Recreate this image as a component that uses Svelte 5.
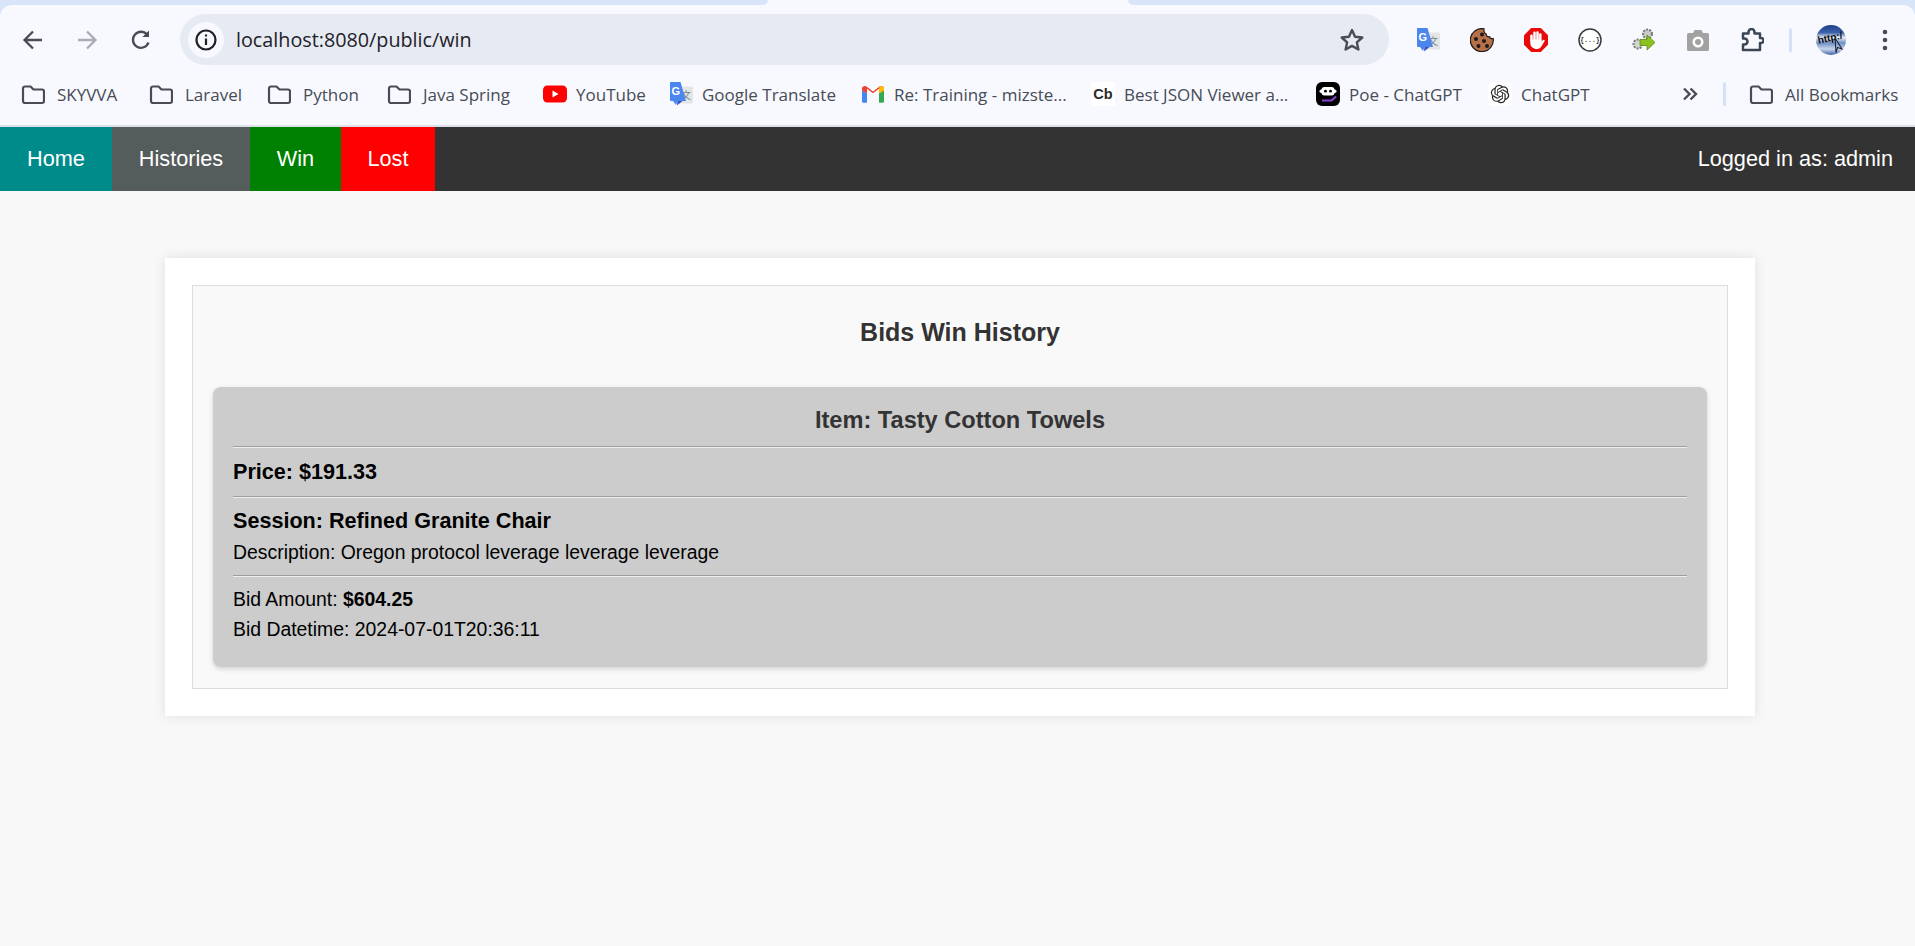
<script>
  const navLinks = [
    { label: 'Home', color: '#008b8b', width: 112 },
    { label: 'Histories', color: '#555c5c', width: 138 },
    { label: 'Win', color: '#008000', width: 91 },
    { label: 'Lost', color: '#ff0000', width: 94 }
  ];

  // widths of the bookmark slots, a shelf does not distribute them evenly
  const bookmarks = [
    { label: 'SKYVVA', icon: 'folder', width: 128 },
    { label: 'Laravel', icon: 'folder', width: 118 },
    { label: 'Python', icon: 'folder', width: 120 },
    { label: 'Java Spring', icon: 'folder', width: 156 },
    { label: 'YouTube', icon: 'youtube', width: 126 },
    { label: 'Google Translate', icon: 'translate', width: 192 },
    { label: 'Re: Training - mizste...', icon: 'gmail', width: 230 },
    { label: 'Best JSON Viewer a...', icon: 'cb', width: 225 },
    { label: 'Poe - ChatGPT', icon: 'poe', width: 172 },
    { label: 'ChatGPT', icon: 'gpt', width: 120 }
  ];

  const bid = {
    item: 'Tasty Cotton Towels',
    price: '$191.33',
    session: 'Refined Granite Chair',
    description: 'Oregon protocol leverage leverage leverage',
    amount: '$604.25',
    datetime: '2024-07-01T20:36:11'
  };
</script>

{#snippet folder()}
  <svg class="bm-icon" viewBox="0 0 24 24" fill="none" stroke="#474c55" stroke-width="2.2" stroke-linejoin="round">
    <path d="M2 6.500a2 2 0 0 1 2-2h5.500l3 3H21a2 2 0 0 1 2 2V19a2 2 0 0 1-2 2H4a2 2 0 0 1-2-2z" />
  </svg>
{/snippet}

{#snippet translate()}
  <svg class="bm-icon" viewBox="0 0 24 24">
    <rect x="9" y="4.500" width="15" height="17" rx="1" fill="#e3e5e6" />
    <text x="17" y="17" font-size="10" text-anchor="middle" fill="#6f8388" font-family="'Noto Sans CJK SC', sans-serif">文</text>
    <path d="M1 0h10.500l5.500 19H8.500l-1.500 4-3-4H2a1 1 0 0 1-1-1z" fill="#4a86ee" />
    <path d="M8.500 19h5l-5.500 4.500z" fill="#3b4fc4" />
    <text x="6.800" y="13" font-size="11" font-weight="700" text-anchor="middle" fill="#fff" font-family="'Liberation Sans', sans-serif">G</text>
  </svg>
{/snippet}

<div class="browser">
  <div class="chrome">
    <div class="tabstrip">
      <div class="tab-left"></div>
      <div class="tab-active"></div>
      <div class="tab-right"></div>
    </div>

    <div class="toolbar">
      <div class="nav-buttons">
        <svg class="tb-icon" viewBox="0 0 24 24" fill="none" stroke="#474c55" stroke-width="2.300">
          <path d="M21 12H4M12 3.500 3.500 12l8.500 8.500" />
        </svg>
        <svg class="tb-icon" viewBox="0 0 24 24" fill="none" stroke="#a9adb4" stroke-width="2.300">
          <path d="M3 12h17M12 3.500 20.500 12 12 20.500" />
        </svg>
        <svg class="tb-icon" viewBox="0 0 24 24" fill="none" stroke="#474c55" stroke-width="2.300">
          <path d="M19.500 14.500A8 8 0 1 1 18 6.500" />
          <path d="M20 2.500V9h-6.500z" fill="#474c55" stroke="none" />
        </svg>
      </div>

      <div class="omnibox">
        <span class="site-info">
          <svg width="22" height="22" viewBox="0 0 22 22" fill="none" stroke="#1f2126" stroke-width="2.200">
            <circle cx="11" cy="11" r="9.500" />
            <path d="M11 9.500v6.500M11 5.500v2" />
          </svg>
        </span>
        <span class="url">localhost:8080/public/win</span>
        <svg class="star" viewBox="0 0 24 24" fill="none" stroke="#474c55" stroke-width="2.200" stroke-linejoin="round">
          <path d="M12 2.800l2.800 6.200 6.700.7-5 4.500 1.400 6.600-5.900-3.400-5.900 3.400 1.400-6.600-5-4.500 6.700-.7z" />
        </svg>
      </div>

      <div class="extensions">
        {@render translate()}
        <svg class="ext-icon" viewBox="0 0 24 24">
          <path d="M14 .8a11.500 11.500 0 1 0 9.200 9.700c-1.800.6-3.200-.3-3.500-1.700-2 .4-3.600-.8-3.500-2.800C14.600 6 13.600 3 14 .8z" fill="#b5714a" stroke="#1f1a17" stroke-width="1.200" />
          <circle cx="12" cy="6.500" r="2" fill="#1f1a17" />
          <circle cx="6" cy="11" r="2" fill="#1f1a17" />
          <circle cx="14" cy="13" r="2" fill="#1f1a17" />
          <circle cx="8.500" cy="18" r="2" fill="#1f1a17" />
          <circle cx="17" cy="18" r="2" fill="#1f1a17" />
        </svg>
        <svg class="ext-icon" viewBox="0 0 24 24">
          <path d="M7.200 0h9.600L24 7.200v9.600L16.800 24H7.200L0 16.800V7.200z" fill="#e80b0b" />
          <path d="M7.500 12.500V7.800M10.500 12.500V4.800M13.500 12.500V4.500M16.300 13V6.500" stroke="#fff" stroke-width="2.500" stroke-linecap="round" fill="none" />
          <path d="M6.300 11.500h11.200V14l1.200-1.800c.9-1.200 2.500-.2 1.800 1.100L17 19c-.9 1.300-2.200 2-4 2-4 0-6.700-2.400-6.700-6z" fill="#fff" />
        </svg>
        <svg class="ext-icon" viewBox="0 0 24 24">
          <circle cx="12" cy="12" r="11" fill="#fff" stroke="#3a3a3a" stroke-width="1.500" />
          <text x="12" y="14.300" font-size="6.500" font-weight="700" text-anchor="middle" fill="#2b2b2b" font-family="'Liberation Mono', monospace">&#123;...&#125;</text>
        </svg>
        <svg class="ext-icon" viewBox="0 0 24 24">
          <circle cx="15.500" cy="6" r="4.500" fill="#c9cbc9" stroke="#777" stroke-width="2" stroke-dasharray="2 1.200" />
          <circle cx="6" cy="16" r="4.500" fill="#d3d5d3" stroke="#777" stroke-width="2" stroke-dasharray="2 1.200" />
          <path d="M8 11.500h7V7l8 7.500-8 7.500v-4.500H8z" fill="#8cc21f" stroke="#5d8a12" stroke-width=".8" />
        </svg>
        <svg class="ext-icon" viewBox="0 0 24 24">
          <path d="M2.500 5H7l1.500-3h7L17 5h4.500A1.500 1.500 0 0 1 23 6.500v15a1.500 1.500 0 0 1-1.500 1.500h-19A1.500 1.500 0 0 1 1 21.500v-15A1.500 1.500 0 0 1 2.500 5z" fill="#a2a2a2" />
          <circle cx="12" cy="14" r="5.500" fill="#fff" />
          <circle cx="12" cy="14" r="3" fill="#a2a2a2" />
        </svg>
        <svg class="ext-icon" viewBox="0 0 24 24" fill="none" stroke="#3b4654" stroke-width="2.500" stroke-linejoin="round">
          <path d="M3 5.500h5.500V4a3 3 0 0 1 6 0v1.500H20V10h1a2.500 2.500 0 0 1 0 5h-1v7H3v-5.500h1.500a3 3 0 0 0 0-6H3z" />
        </svg>
      </div>

      <span class="divider"></span>

      <svg class="avatar" viewBox="0 0 30 30">
        <defs>
          <linearGradient id="globe" x1="0" y1="0" x2="0" y2="1">
            <stop offset="0" stop-color="#1f3f86" />
            <stop offset=".25" stop-color="#3a62ab" />
            <stop offset=".42" stop-color="#e6edf7" />
            <stop offset=".6" stop-color="#6f8fc4" />
            <stop offset=".8" stop-color="#c9d6ea" />
            <stop offset="1" stop-color="#3d62a8" />
          </linearGradient>
        </defs>
        <circle cx="15" cy="15" r="15" fill="url(#globe)" />
        <text x="2" y="16" font-size="10" font-weight="700" fill="#0c0c0c" font-family="'Liberation Sans', sans-serif" transform="rotate(-12 15 15)">http:/</text>
        <path d="M19 13l7 11-4.500-1.500-1.500 5z" fill="none" stroke="#1b2436" stroke-width="1.100" />
      </svg>

      <svg class="kebab" viewBox="0 0 6 22" fill="#474c55">
        <circle cx="3" cy="3" r="2.300" />
        <circle cx="3" cy="11" r="2.300" />
        <circle cx="3" cy="19" r="2.300" />
      </svg>
    </div>

    <div class="bookmarks">
      <div class="bookmark-list">
        {#each bookmarks as b}
          <span class="bookmark" class:is-folder={b.icon === 'folder'} style="width: {b.width}px">
            {#if b.icon === 'folder'}
              {@render folder()}
            {:else if b.icon === 'youtube'}
              <svg class="bm-icon" viewBox="0 0 24 24">
                <rect x="0" y="3.500" width="24" height="17" rx="4.500" fill="#f00" />
                <path d="M9.500 8.500v7l6-3.500z" fill="#fff" />
              </svg>
            {:else if b.icon === 'translate'}
              {@render translate()}
            {:else if b.icon === 'gmail'}
              <svg class="bm-icon" viewBox="0 0 24 24">
                <g transform="translate(0 1.500) scale(1 .88)">
                  <path d="M1 8v12.500A1.500 1.500 0 0 0 2.500 22H6V11z" fill="#4285f4" />
                  <path d="M18 11v11h3.500a1.500 1.500 0 0 0 1.500-1.500V8z" fill="#34a853" />
                  <path d="M1 5.500C1 3 4 2 5.500 3.500L12 9l6.500-5.500C20 2 23 3 23 5.500V8l-5 3.500V6L12 11 6 6v5.500L1 8z" fill="#ea4335" />
                  <path d="M18 6v5.500L23 8V5.500C23 3 20 2 18.500 3.500z" fill="#fbbc04" />
                </g>
              </svg>
            {:else if b.icon === 'cb'}
              <svg class="bm-icon" viewBox="0 0 24 24">
                <rect width="24" height="24" fill="#fff" />
                <text x="12" y="17" font-size="14.500" font-weight="700" text-anchor="middle" fill="#2a2a2a" font-family="'Liberation Sans', sans-serif">Cb</text>
              </svg>
            {:else if b.icon === 'poe'}
              <svg class="bm-icon" viewBox="0 0 24 24">
                <rect width="24" height="24" rx="6" fill="#000" />
                <rect x="5.500" y="5" width="13" height="8.500" rx="3" fill="#fff" />
                <rect x="3.500" y="7.500" width="17" height="3.500" rx="1.700" fill="#fff" />
                <circle cx="9.500" cy="9.200" r="1.400" fill="#000" />
                <circle cx="14.500" cy="9.200" r="1.400" fill="#000" />
                <path d="M6 18.500h9.500l4.500-4" fill="none" stroke="#8a3fd8" stroke-width="2.200" />
              </svg>
            {:else}
              <svg class="bm-icon" viewBox="0 0 24 24">
                <rect width="24" height="24" rx="5" fill="#fff" />
                <path transform="translate(2.800 2.800) scale(.77)" fill="#2a2a2a" d="M22.2819 9.8211a5.9847 5.9847 0 0 0-.5157-4.9108 6.0462 6.0462 0 0 0-6.5098-2.9A6.0651 6.0651 0 0 0 4.9807 4.1818a5.9847 5.9847 0 0 0-3.9977 2.9 6.0462 6.0462 0 0 0 .7427 7.0966 5.98 5.98 0 0 0 .511 4.9107 6.051 6.051 0 0 0 6.5146 2.9001A5.9847 5.9847 0 0 0 13.2599 24a6.0557 6.0557 0 0 0 5.7718-4.2058 5.9894 5.9894 0 0 0 3.9977-2.9001 6.0557 6.0557 0 0 0-.7475-7.0729zm-9.022 12.6081a4.4755 4.4755 0 0 1-2.8764-1.0408l.1419-.0804 4.7783-2.7582a.7948.7948 0 0 0 .3927-.6813v-6.7369l2.02 1.1686a.071.071 0 0 1 .038.052v5.5826a4.504 4.504 0 0 1-4.4945 4.4944zm-9.6607-4.1254a4.4708 4.4708 0 0 1-.5346-3.0137l.142.0852 4.783 2.7582a.7712.7712 0 0 0 .7806 0l5.8428-3.3685v2.3324a.0804.0804 0 0 1-.0332.0615L9.74 19.9502a4.4992 4.4992 0 0 1-6.1408-1.6464zM2.3408 7.8956a4.485 4.485 0 0 1 2.3655-1.9728V11.6a.7664.7664 0 0 0 .3879.6765l5.8144 3.3543-2.0201 1.1685a.0757.0757 0 0 1-.071 0l-4.8303-2.7865A4.504 4.504 0 0 1 2.3408 7.872zm16.5963 3.8558L13.1038 8.364 15.1192 7.2a.0757.0757 0 0 1 .071 0l4.8303 2.7913a4.4944 4.4944 0 0 1-.6765 8.1042v-5.6772a.79.79 0 0 0-.407-.667zm2.0107-3.0231l-.142-.0852-4.7735-2.7818a.7759.7759 0 0 0-.7854 0L9.409 9.2297V6.8974a.0662.0662 0 0 1 .0284-.0615l4.8303-2.7866a4.4992 4.4992 0 0 1 6.6802 4.66zM8.3065 12.863l-2.02-1.1638a.0804.0804 0 0 1-.038-.0567V6.0742a4.4992 4.4992 0 0 1 7.3757-3.4537l-.142.0805L8.704 5.459a.7948.7948 0 0 0-.3927.6813zm1.0976-2.3654l2.602-1.4998 2.6069 1.4998v2.9994l-2.5974 1.4997-2.6067-1.4997Z" />
              </svg>
            {/if}
            <span>{b.label}</span>
          </span>
        {/each}
      </div>

      <svg class="more" viewBox="0 0 16 14" fill="none" stroke="#474c55" stroke-width="2.400">
        <path d="M2 1.500 7.500 7 2 12.500M8.500 1.500 14 7l-5.500 5.500" />
      </svg>
      <span class="divider"></span>
      <span class="bookmark is-folder all">
        {@render folder()}
        <span>All Bookmarks</span>
      </span>
    </div>
  </div>

  <nav class="topnav">
    {#each navLinks as link}
      <a href="#top" style="background-color: {link.color}; width: {link.width}px">{link.label}</a>
    {/each}
    <span class="user">Logged in as: admin</span>
  </nav>

  <main class="page">
    <section class="container">
      <div class="history">
        <h2>Bids Win History</h2>
        <article class="bid-card">
          <h3>Item: {bid.item}</h3>
          <hr />
          <p class="price">Price: {bid.price}</p>
          <hr />
          <p class="session">Session: {bid.session}</p>
          <p class="desc">Description: {bid.description}</p>
          <hr />
          <div class="bid-lines">
            <p>Bid Amount: <strong>{bid.amount}</strong></p>
            <p>Bid Datetime: {bid.datetime}</p>
          </div>
        </article>
      </div>
    </section>
  </main>
</div>

<style>
  :global(body) {
    background: #f8f8f8;
    font-family: 'Liberation Sans', Arial, sans-serif;
  }

  .browser {
    min-height: 946px;
    background: #f8f8f8;
  }

  .chrome {
    background: #d8e4f8;
    font-family: 'Open Sans', 'Noto Sans', sans-serif;
    font-kerning: none;
  }

  .tabstrip {
    display: flex;
    height: 5px;
    background: #f8f9ff;
  }

  .tab-left,
  .tab-right {
    background: #d8e4f8;
  }

  .tab-left {
    width: 768px;
    border-bottom-right-radius: 8px;
  }

  .tab-active {
    width: 360px;
  }

  .tab-right {
    flex: 1;
    border-bottom-left-radius: 8px;
  }

  .toolbar {
    display: flex;
    align-items: center;
    height: 69px;
    background: #f8f9ff;
    border-radius: 12px 12px 0 0;
  }

  .nav-buttons {
    display: flex;
    align-items: center;
    gap: 30px;
    padding-left: 21px;
  }

  .tb-icon {
    width: 24px;
    height: 24px;
  }

  .omnibox {
    display: flex;
    align-items: center;
    width: 1209px;
    height: 51px;
    margin-left: 27px;
    box-sizing: border-box;
    padding: 0 24px 0 8px;
    background: #e6eaf3;
    border-radius: 26px;
  }

  .site-info {
    display: flex;
    align-items: center;
    justify-content: center;
    width: 36px;
    height: 36px;
    background: #f8f9ff;
    border-radius: 50%;
  }

  .url {
    margin-left: 12px;
    flex: 1;
    font-size: 19.750px;
    color: #1f2126;
  }

  .star {
    width: 26px;
    height: 26px;
  }

  .extensions {
    display: flex;
    align-items: center;
    gap: 30px;
    margin-left: 27px;
  }

  .ext-icon,
  .extensions :global(.bm-icon) {
    width: 24px;
    height: 24px;
  }

  .divider {
    width: 3px;
    height: 24px;
    background: #d3e2f8;
    border-radius: 2px;
    margin-left: 25px;
  }

  .avatar {
    width: 30px;
    height: 30px;
    margin-left: 24px;
  }

  .kebab {
    width: 6px;
    height: 22px;
    margin-left: 36px;
  }

  .bookmarks {
    display: flex;
    align-items: center;
    height: 51px;
    box-sizing: border-box;
    padding: 0 0 11px 21px;
    background: #f8f9ff;
    font-size: 17px;
    color: #474c55;
  }

  .bookmark-list {
    display: flex;
    align-items: center;
    width: 1661px;
  }

  .bookmark {
    display: inline-flex;
    align-items: center;
    gap: 9px;
    white-space: nowrap;
  }

  .is-folder {
    gap: 12px;
  }

  .bm-icon {
    width: 24px;
    height: 24px;
    flex: none;
  }

  .more {
    width: 16px;
    height: 14px;
  }

  .all {
    margin-left: 23px;
  }

  .topnav {
    display: flex;
    align-items: stretch;
    height: 64px;
    border-top: 2px solid #dfe1e8;
    background: #333;
  }

  .topnav a {
    display: flex;
    align-items: center;
    justify-content: center;
    color: #fff;
    font-size: 21.700px;
    text-decoration: none;
  }

  .user {
    margin-left: auto;
    align-self: center;
    padding-right: 22px;
    color: #fff;
    font-size: 21.700px;
  }

  .page {
    padding: 67px 160px 0 165px;
  }

  .container {
    padding: 27px;
    background: #fff;
    box-shadow: 0 0 12px rgba(0, 0, 0, 0.1);
  }

  .history {
    padding: 20px 20px 21px;
    background: #f9f9f9;
    border: 1px solid #ddd;
  }

  h2 {
    margin: 0 0 40px;
    padding-top: 12px;
    text-align: center;
    font-size: 25px;
    line-height: 29px;
    color: #333;
  }

  .bid-card {
    padding: 14px 20px 23px;
    background: #ccc;
    border-radius: 8px;
    box-shadow: 0 2px 5px rgba(0, 0, 0, 0.15);
    color: #000;
  }

  h3 {
    margin: 0;
    text-align: center;
    font-size: 23.600px;
    line-height: 39px;
    color: #333;
  }

  hr {
    margin: 6px 0;
    border: 0;
    border-top: 1px solid #9e9e9e;
    border-bottom: 1px solid #eee;
  }

  p {
    margin: 0;
  }

  .price,
  .session {
    font-size: 21.600px;
    font-weight: 700;
    line-height: 36px;
  }

  .session {
    line-height: 33px;
  }

  .desc,
  .bid-lines {
    font-size: 19.400px;
    line-height: 30px;
  }

  .desc {
    padding-bottom: 2px;
  }

  .bid-lines {
    padding-top: 1px;
  }
</style>
